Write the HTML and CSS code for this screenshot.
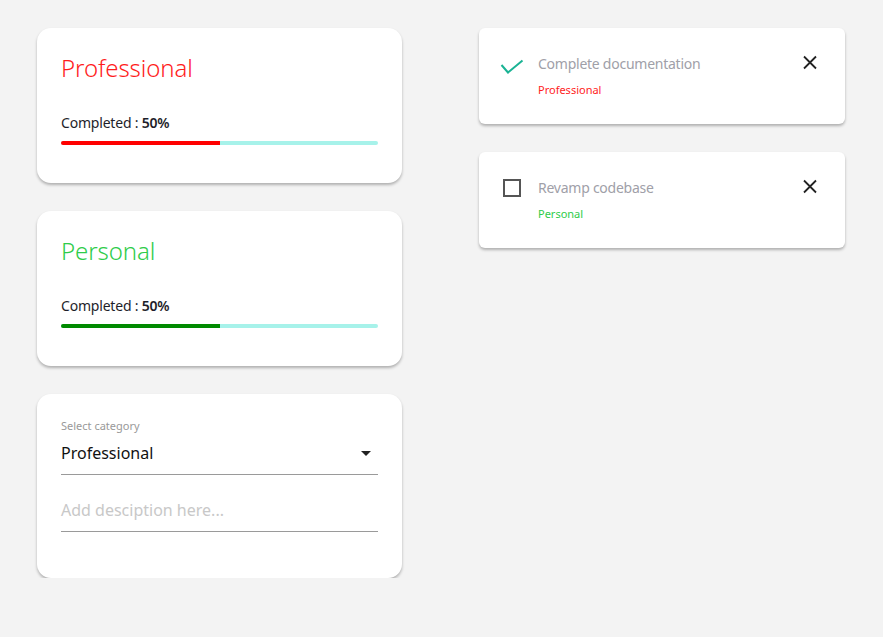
FILE: index.html
```html
<!DOCTYPE html>
<html lang="en">
<head>
<meta charset="utf-8">
<title>Tasks</title>
<link rel="stylesheet" href="styles.css">
</head>
<body>
<main class="page">
  <section class="col-left">
    <div class="card cat-card">
      <h2 class="cat-title professional">Professional</h2>
      <p class="completed">Completed : <b>50%</b></p>
      <div class="bar"><div class="bar-fill red" style="width:50%"></div></div>
    </div>
    <div class="card cat-card">
      <h2 class="cat-title personal">Personal</h2>
      <p class="completed">Completed : <b>50%</b></p>
      <div class="bar"><div class="bar-fill green" style="width:50%"></div></div>
    </div>
    <div class="card form-card">
      <label class="field-label">Select category</label>
      <div class="select">
        <span class="select-value">Professional</span>
        <svg class="select-arrow" width="24" height="24" viewBox="0 0 24 24"><path d="M7 10l5 5 5-5z" fill="#222"/></svg>
      </div>
      <div class="input"><span class="placeholder">Add desciption here...</span></div>
    </div>
  </section>
  <section class="col-right">
    <div class="task">
      <svg class="task-icon" width="24" height="24" viewBox="0 0 24 24"><polyline points="1.5,11 8,18.5 22.5,6.5" fill="none" stroke="#1ab394" stroke-width="2"/></svg>
      <div class="task-body">
        <div class="task-title">Complete documentation</div>
        <div class="task-cat professional">Professional</div>
      </div>
      <svg class="task-close" width="24" height="24" viewBox="0 0 24 24"><path d="M6 2.5L18 14.5M18 2.5L6 14.5" stroke="#222" stroke-width="1.8" fill="none"/></svg>
    </div>
    <div class="task">
      <svg class="task-icon" width="24" height="24" viewBox="0 0 24 24"><rect x="4" y="2" width="16" height="16" fill="none" stroke="#555" stroke-width="2"/></svg>
      <div class="task-body">
        <div class="task-title">Revamp codebase</div>
        <div class="task-cat personal">Personal</div>
      </div>
      <svg class="task-close" width="24" height="24" viewBox="0 0 24 24"><path d="M6 2.5L18 14.5M18 2.5L6 14.5" stroke="#222" stroke-width="1.8" fill="none"/></svg>
    </div>
  </section>
</main>
</body>
</html>
```
FILE: styles.css
```css
html, body {
  margin: 0;
  padding: 0;
  background: #f3f3f3;
  font-family: "Noto Sans", "Open Sans", sans-serif;
  color: #222;
}
.page {
  display: flex;
  align-items: flex-start;
  gap: 77px;
  padding: 28px 0 0 37px;
}
.col-left {
  width: 365px;
  display: flex;
  flex-direction: column;
  gap: 28px;
}
.col-right {
  width: 366px;
  display: flex;
  flex-direction: column;
  gap: 28px;
}
.card {
  background: #fff;
  border-radius: 14px;
  box-shadow: 0 2px 3px rgba(0,0,0,0.28);
}
.cat-card {
  padding: 24px 24px 38px;
}
.cat-title {
  margin: 0;
  font-size: 24px;
  line-height: 32px;
  font-weight: 300;
  letter-spacing: -0.1px;
}
.professional { color: #ff1d1d; }
.personal { color: #2ecc4a; }
.completed {
  margin: 29px 0 0;
  font-size: 14px;
  line-height: 20px;
  color: #1e1e2a;
  letter-spacing: -0.2px;
}
.completed b { font-weight: 600; }
.bar {
  margin-top: 8px;
  height: 4px;
  border-radius: 2px;
  background: #a7f2ea;
  overflow: hidden;
}
.bar-fill { height: 100%; }
.bar-fill.red { background: #ff0000; }
.bar-fill.green { background: #008a00; }
.form-card {
  padding: 24px 24px 46px;
}
.field-label {
  display: block;
  font-size: 11px;
  line-height: 16px;
  color: #999;
}
.select {
  margin-top: 7px;
  display: flex;
  align-items: center;
  justify-content: space-between;
  padding-bottom: 9px;
  border-bottom: 1px solid #9a9a9a;
}
.select-value {
  font-size: 16px;
  line-height: 24px;
  color: #111;
}
.input {
  margin-top: 23px;
  padding-bottom: 9px;
  border-bottom: 1px solid #9a9a9a;
}
.placeholder {
  display: block;
  font-size: 16px;
  line-height: 24px;
  color: #c8c8c8;
}
.task {
  background: #fff;
  border-radius: 6px;
  box-shadow: 0 2px 3px rgba(0,0,0,0.28);
  display: flex;
  align-items: flex-start;
  padding: 26px 23px 26px 21px;
}
.task-icon { flex: none; }
.task-body {
  flex: 1;
  margin-left: 14px;
}
.task-title {
  font-size: 14px;
  line-height: 20px;
  color: #a0a0a8;
  letter-spacing: -0.25px;
}
.task-cat {
  margin-top: 8px;
  font-size: 11px;
  line-height: 16px;
}
.task-close { flex: none; }
```
